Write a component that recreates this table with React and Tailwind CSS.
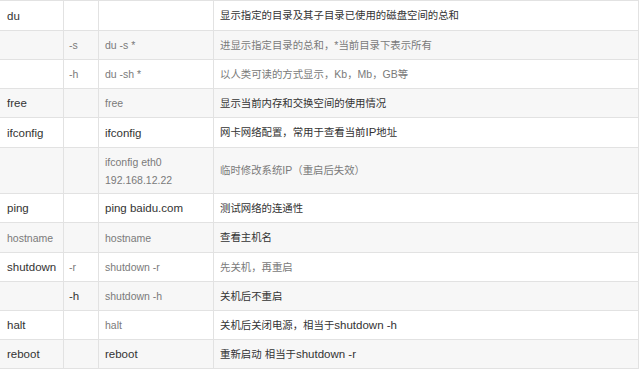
import React from 'react';

const DARK = 'text-[#333333] text-[11.5px]';
const LIGHT = 'text-[#7a7a7a] text-[10.5px]';

// [text, dark?] per column; h = row height
const rows = [
    { h: 'h-[30px]', cells: [['du', 1], ['', 0], ['', 0], ['显示指定的目录及其子目录已使用的磁盘空间的总和', 1]] },
    { h: 'h-[29px]', cells: [['', 0], ['-s', 0], ['du -s *', 0], ['进显示指定目录的总和，*当前目录下表示所有', 0]] },
    { h: 'h-[29px]', cells: [['', 0], ['-h', 0], ['du -sh *', 0], ['以人类可读的方式显示，Kb，Mb，GB等', 0]] },
    { h: 'h-[29px]', cells: [['free', 1], ['', 0], ['free', 0], ['显示当前内存和交换空间的使用情况', 1]] },
    { h: 'h-[30px]', cells: [['ifconfig', 1], ['', 0], ['ifconfig', 1], ['网卡网络配置，常用于查看当前IP地址', 1]] },
    { h: 'h-[46px]', cells: [['', 0], ['', 0], ['ifconfig eth0\n192.168.12.22', 0], ['临时修改系统IP（重启后失效）', 0]] },
    { h: 'h-[29px]', cells: [['ping', 1], ['', 0], ['ping baidu.com', 1], ['测试网络的连通性', 1]] },
    { h: 'h-[30px]', cells: [['hostname', 0], ['', 0], ['hostname', 0], ['查看主机名', 1]] },
    { h: 'h-[29px]', cells: [['shutdown', 1], ['-r', 0], ['shutdown -r', 0], ['先关机，再重启', 0]] },
    { h: 'h-[29px]', cells: [['', 0], ['-h', 1], ['shutdown -h', 0], ['关机后不重启', 1]] },
    { h: 'h-[29px]', cells: [['halt', 1], ['', 0], ['halt', 0], ['关机后关闭电源，相当于shutdown -h', 1]] },
    { h: 'h-[29px]', cells: [['reboot', 1], ['', 0], ['reboot', 1], ['重新启动 相当于shutdown -r', 1]] },
];

const widths = ['w-[64px]', 'w-[35px]', 'w-[115px]', 'w-[425px]'];
const pads = ['pl-[7px]', 'pl-[5px]', 'pl-[6px]', 'pl-[6px]'];

// CJK glyphs sit smaller than the latin text in the source
function Mixed({ text }) {
    const parts = text.split(/([\u3000-\u303f\u4e00-\u9fff\uff00-\uffef]+)/);
    return parts.map((p, i) =>
        /[\u3000-\u303f\u4e00-\u9fff\uff00-\uffef]/.test(p) ? (
            <span key={i} className="text-[10.4px]">{p}</span>
        ) : (
            <span key={i}>{p}</span>
        )
    );
}

export default function App() {
    return (
        <div
            className="h-[369px] w-[640px] bg-white"
            style={{ fontFamily: '"Liberation Sans", "Noto Sans CJK SC", sans-serif' }}
        >
            <div className="w-[639px] border-t border-r border-[#e2e2e2]">
                {rows.map((row, r) => (
                    <div
                        key={r}
                        className={`flex border-b border-[#e2e2e2] ${row.h} ${r % 2 === 1 ? 'bg-[#f7f7f7]' : 'bg-white'}`}
                    >
                        {row.cells.map(([text, dark], c) => (
                            <div
                                key={c}
                                className={`flex shrink-0 items-center whitespace-pre-line leading-[18px] ${widths[c]} ${pads[c]} ${
                                    c < 3 ? 'border-r border-[#e2e2e2]' : ''
                                } ${dark ? DARK : LIGHT}`}
                            >
                                <div>
                                    <Mixed text={text} />
                                </div>
                            </div>
                        ))}
                    </div>
                ))}
            </div>
        </div>
    );
}
